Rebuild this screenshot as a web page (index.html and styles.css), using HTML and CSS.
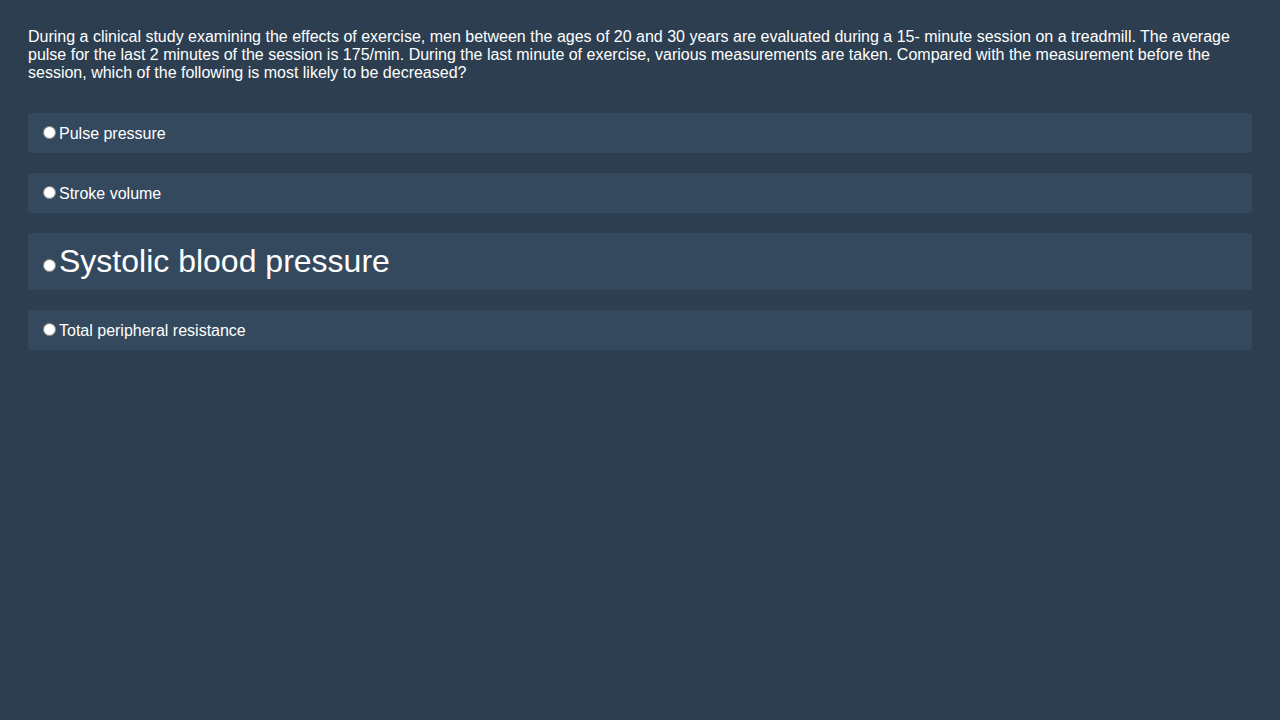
FILE: index.html
```html
<!DOCTYPE html>
<html>
<head>
<meta charset="utf-8">
<link rel="stylesheet" href="styles.css">
</head>
<body>
<div class="quiz">
  <p class="question">During a clinical study examining the effects of exercise, men between the ages of 20 and 30 years are evaluated during a 15- minute session on a treadmill. The average pulse for the last 2 minutes of the session is 175/min. During the last minute of exercise, various measurements are taken. Compared with the measurement before the session, which of the following is most likely to be decreased?</p>
  <label class="option"><input type="radio" name="q">Pulse pressure</label>
  <label class="option"><input type="radio" name="q">Stroke volume</label>
  <label class="option option-large"><input type="radio" name="q">Systolic blood pressure</label>
  <label class="option"><input type="radio" name="q">Total peripheral resistance</label>
</div>
</body>
</html>
```

FILE: styles.css
```css
html, body {
  margin: 0;
  background: #2c3e50;
}
body {
  padding: 28px;
  font-family: "Liberation Sans", Arial, sans-serif;
  font-size: 16px;
  color: #ffffff;
}
.question {
  margin: 0 0 30.5px 0;
  line-height: normal;
}
.option {
  display: block;
  background: #34495e;
  padding: 10px;
  margin-bottom: 20px;
  border-radius: 4px;
  line-height: normal;
}
.option-large {
  font-size: 32px;
}
.option input {
  margin: 3px 3px 0 5px;
}
```
